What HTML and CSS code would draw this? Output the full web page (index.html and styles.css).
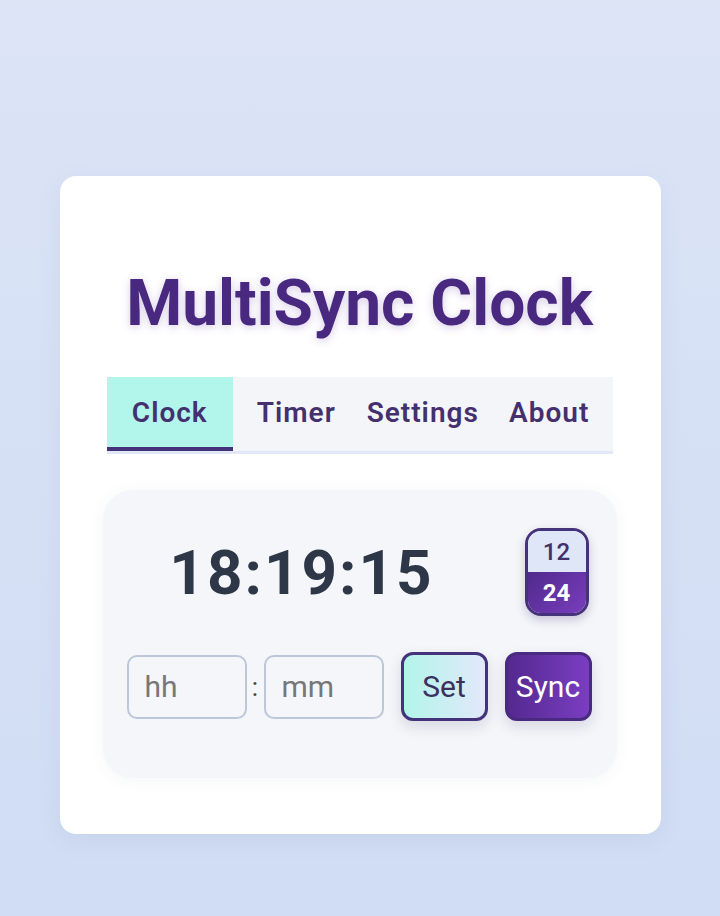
FILE: index.html
```html
<!DOCTYPE html>
<html lang="en">
<head>
    <meta charset="UTF-8">
    <title>MultiSync Clock</title>
    <link rel="stylesheet" href="styles.css">
</head>
<body>
    <!-- 메인 카드 -->
    <div class="card">
        <h1 class="title">MultiSync Clock</h1>

        <!-- 탭 메뉴 -->
        <nav class="tabs">
            <a href="#" class="tab on">Clock</a>
            <a href="#" class="tab">Timer</a>
            <a href="#" class="tab">Settings</a>
            <a href="#" class="tab">About</a>
        </nav>

        <!-- 시계 패널 -->
        <div class="panel">
            <div class="clockrow">
                <div class="clock">18:19:15</div>
                <div class="fmt">
                    <span class="h12">12</span>
                    <span class="h24">24</span>
                </div>
            </div>
            <div class="setrow">
                <input class="tin" type="text" placeholder="hh">
                <span class="colon">:</span>
                <input class="tin" type="text" placeholder="mm">
                <button class="btn set">Set</button>
                <button class="btn sync">Sync</button>
            </div>
        </div>
    </div>
</body>
</html>
```
FILE: styles.css
```css
html,body{
    margin: 0;padding: 0;
}
body{
    min-height: 916px;
    font-family: Roboto, "Liberation Sans", sans-serif;
    background-image: linear-gradient(to bottom, #dce4f6, #d0ddf4);
    overflow: hidden;
}

/* 카드 */
.card{
    width: 601px;
    margin: 176px auto 0;
    padding: 48px 48px 56px 47px;
    box-sizing: border-box;
    background-color: #fff;
    border-radius: 16px;
    box-shadow: 0 6px 24px rgba(80, 90, 140, .08);
}
.title{
    margin: 42px 0 36px;
    text-align: center;
    font-size: 64px; font-weight: 700;
    line-height: 75px;
    color: #48297f;
    text-shadow: 0 2px 8px rgba(90, 50, 160, .25);
}

/* 탭 */
.tabs{
    display: flex;
    background-color: #f4f5f9;
    border-bottom: 3px solid #e2e8f7;
}
.tab{
    flex: 1;
    height: 70px; line-height: 72px;
    text-align: center;
    text-decoration: none;
    font-size: 28px; font-weight: 600;
    letter-spacing: 1px;
    color: #45306f;
    border-bottom: 4px solid transparent;
}
.tab.on{
    background-color: #b2f5ea;
    border-bottom-color: #44337a;
}

/* 패널 */
.panel{
    margin: 36px -4px 0;
    padding: 38px 24px 57px;
    background-color: #f4f6f9;
    border-radius: 30px;
    box-shadow: 0 2px 16px rgba(60, 70, 110, .05);
}
.clockrow{
    display: flex;
    align-items: center;
}
.clock{
    flex: 1;
    text-align: center;
    font-size: 62px; font-weight: 700;
    letter-spacing: 2px;
    color: #2d3748;
}
.fmt{
    width: 64px; height: 88px;
    margin: 0 4px 0 48px;
    box-sizing: border-box;
    border: 3px solid #44337a;
    border-radius: 16px;
    overflow: hidden;
    display: flex; flex-direction: column;
    box-shadow: 0 4px 10px rgba(74, 42, 128, .25);
}
.fmt span{
    flex: 1;
    display: flex; align-items: center; justify-content: center;
    font-size: 24px;
}
.h12{
    background-color: #dfe6f8;
    color: #40306e; font-weight: 500;
}
.h24{
    background-image: linear-gradient(135deg, #4f2a8c, #7a3dbd);
    color: #fff; font-weight: 700;
}

/* 시간 설정 */
.setrow{
    display: flex;
    align-items: center;
    margin-top: 36px;
}
.tin{
    width: 120px; height: 64px;
    box-sizing: border-box;
    padding: 0 16px;
    border: 2px solid #bcc7d9;
    border-radius: 10px;
    background-color: #f4f6fa;
    font-family: Roboto, "Liberation Sans", sans-serif;
    font-size: 30px;
    color: #2d3748;
}
.tin::placeholder{
    color: #777;
}
.colon{
    width: 17px;
    text-align: center;
    font-size: 26px;
    color: #444;
}
.btn{
    width: 87px; height: 69px;
    margin-left: 17px;
    box-sizing: border-box;
    border: 3px solid #44337a;
    border-radius: 12px;
    font-family: Roboto, "Liberation Sans", sans-serif;
    font-size: 30px;
    padding: 0;
    cursor: pointer;
    box-shadow: 0 6px 14px rgba(60, 50, 110, .15);
}
.set{
    background-image: linear-gradient(90deg, #b2f5ea, #e2e8fa);
    color: #3b3060;
}
.sync{
    background-image: linear-gradient(90deg, #54298f, #7a3ec2);
    color: #fff;
    border-color: #4a2a80;
}
```
